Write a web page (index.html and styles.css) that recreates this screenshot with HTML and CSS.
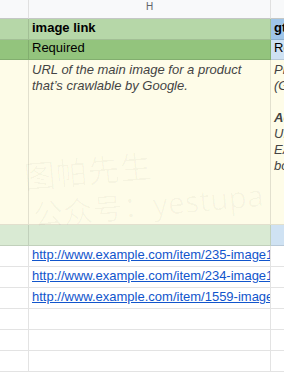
FILE: index.html
```html
<!DOCTYPE html>
<html lang="en">
<head>
  <meta charset="UTF-8">
  <title>Product feed sheet</title>
  <link rel="stylesheet" href="styles.css">
</head>
<body>
  <div class="sheet">
    <!-- column header -->
    <div class="cell col-head"></div>
    <div class="cell col-head center">H</div>
    <div class="cell col-head"></div>

    <!-- attribute name -->
    <div class="cell green"></div>
    <div class="cell green bold">image link</div>
    <div class="cell blue bold">gtin</div>

    <!-- requirement -->
    <div class="cell green-dark"></div>
    <div class="cell green-dark">Required</div>
    <div class="cell blue-light">Recommended</div>

    <!-- description -->
    <div class="cell note"></div>
    <div class="cell note top italic">URL of the main image for a product that’s crawlable by Google.</div>
    <div class="cell note top italic stack">
      <p>Product’s Global Trade Item Number</p>
      <p>(GTIN)</p>
      <p>&nbsp;</p>
      <p class="bold">Accepted values:</p>
      <p>UPC (North America)</p>
      <p>EAN (Europe)</p>
      <p>book ISBN</p>
    </div>

    <div class="cell green-light"></div>
    <div class="cell green-light"></div>
    <div class="cell blue-light"></div>

    <div class="cell"></div>
    <div class="cell"><a href="#">http://www.example.com/item/235-image1.jpg</a></div>
    <div class="cell"></div>

    <div class="cell"></div>
    <div class="cell"><a href="#">http://www.example.com/item/234-image1.jpg</a></div>
    <div class="cell"></div>

    <div class="cell"></div>
    <div class="cell"><a href="#">http://www.example.com/item/1559-image1.jpg</a></div>
    <div class="cell"></div>

    <div class="cell"></div><div class="cell"></div><div class="cell"></div>
    <div class="cell"></div><div class="cell"></div><div class="cell"></div>
    <div class="cell"></div><div class="cell"></div><div class="cell"></div>
  </div>

  <!-- faint watermark over the sheet -->
  <div class="watermark">
    <div class="wm-line big">图帕先生</div>
    <div class="wm-line">公众号：yestupa</div>
  </div>
</body>
</html>
```

FILE: styles.css
```css
body {
  margin: 0;
  background: #ffffff;
  font-family: "Liberation Sans", Arial, sans-serif;
  font-size: 13px;
  color: #000;
  overflow: hidden;
}
.sheet {
  display: grid;
  grid-template-columns: 29px 242px 1fr;
  grid-template-rows: 19px 21px 20px 165px 21px 21px 21px 21px 21px 21px 21px;
  width: 284px;
}
.cell {
  box-sizing: border-box;
  border-right: 1px solid rgba(0, 0, 0, 0.11);
  border-bottom: 1px solid rgba(0, 0, 0, 0.11);
  padding: 0 3px 3px 3px;
  display: flex;
  align-items: flex-end;
  white-space: nowrap;
  overflow: hidden;
  line-height: 16px;
}
.cell:nth-child(3n) { border-right: none; }

.col-head {
  background: #f8f9fa;
  border-right-color: #e0e0e0;
  border-bottom: 1px solid #c4c7c5;
  font-size: 10px;
  color: #5f6368;
  padding: 0 0 3px 0;
}
.center { justify-content: center; }

.green { background: #b6d7a8; }
.green-dark { background: #93c47d; }
.green-light { background: #d9ead3; }
.blue { background: #9fc5e8; }
.blue-light { background: #cfe2f3; }
.note { background: #fefce8; }

.bold { font-weight: bold; }
.italic { font-style: italic; color: #444; }
.top {
  align-items: flex-start;
  white-space: normal;
  padding-top: 2px;
}
.stack { display: block; }
.stack p { margin: 0; white-space: nowrap; }

a {
  color: #1155cc;
  text-decoration: underline;
}

.watermark {
  position: absolute;
  left: 22px;
  top: 157px;
  transform: rotate(-5deg);
  transform-origin: left top;
  color: rgba(0, 0, 0, 0.028);
  font-family: "Noto Sans", "Noto Sans CJK SC", sans-serif;
  pointer-events: none;
}
.wm-line {
  font-size: 30px;
  line-height: 39px;
  white-space: nowrap;
  padding-left: 6px;
}
.wm-line.big { font-size: 32px; padding-left: 0; }
```
